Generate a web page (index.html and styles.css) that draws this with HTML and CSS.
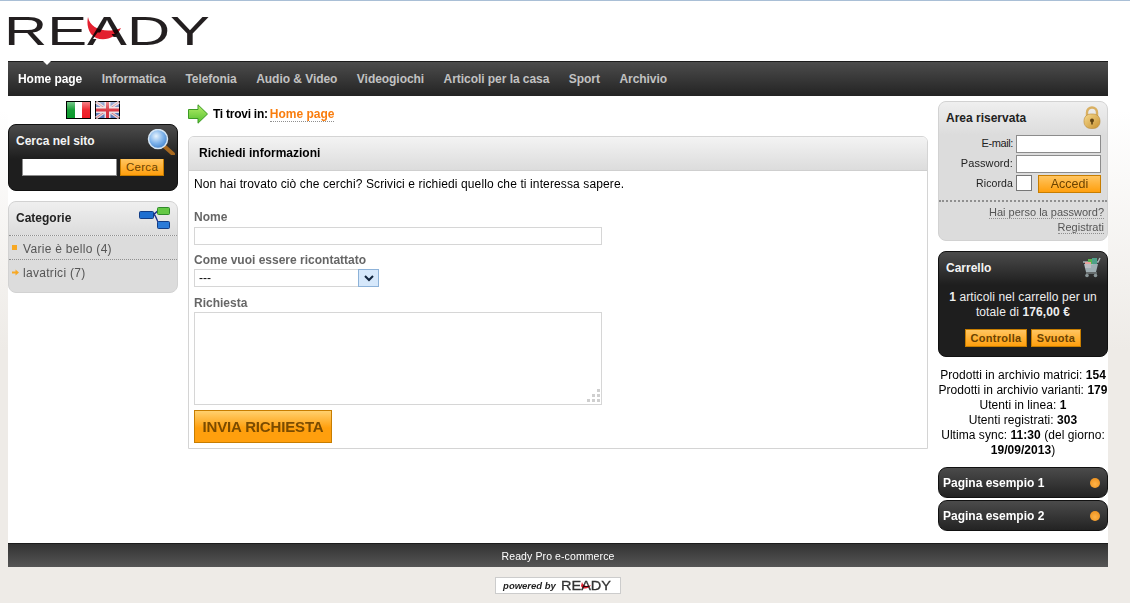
FILE: index.html
```html
<!DOCTYPE html>
<html lang="it">
<head>
<meta charset="utf-8">
<title>Ready Pro e-commerce</title>
<link rel="stylesheet" href="styles.css">
</head>
<body>
<div class="page">
  <header class="head">
    <svg class="logo" width="200" height="32" viewBox="0 0 200 32">
      <text x="-4" y="31" font-family="Liberation Sans" font-size="41.5" fill="#231f20" textLength="206" lengthAdjust="spacingAndGlyphs">READY</text>
      <polygon points="89.500,18.500 102.500,18.500 107,25 85,25" fill="#fff"/>
      <path class="crescent" d="M80 3C82 15 98 20 113 14C108 26 90 29 83 20C79 14 79 8 80 3Z" fill="#e3202f"/>
    </svg>
  </header>
  <nav class="nav">
    <a class="nav-item active" href="#">Home page</a>
    <a class="nav-item" href="#">Informatica</a>
    <a class="nav-item" href="#">Telefonia</a>
    <a class="nav-item" href="#">Audio &amp; Video</a>
    <a class="nav-item" href="#">Videogiochi</a>
    <a class="nav-item" href="#">Articoli per la casa</a>
    <a class="nav-item" href="#">Sport</a>
    <a class="nav-item" href="#">Archivio</a>
  </nav>
  <div class="cols">
    <aside class="side">
      <div class="flags">
        <svg class="flag" width="25" height="18" viewBox="0 0 25 18">
          <defs><linearGradient id="gl" x1="0" y1="0" x2="0" y2="1"><stop offset="0" stop-color="#fff" stop-opacity=".45"/><stop offset=".5" stop-color="#fff" stop-opacity=".05"/><stop offset="1" stop-color="#fff" stop-opacity="0"/></linearGradient></defs>
          <rect width="25" height="18" fill="#000"/>
          <rect x="1" y="1" width="8" height="16" fill="#0b9a2c"/>
          <rect x="9" y="1" width="7" height="16" fill="#fff"/>
          <rect x="16" y="1" width="8" height="16" fill="#ee1c25"/>
          <rect x="1" y="1" width="23" height="16" fill="url(#gl)"/>
        </svg>
        <svg class="flag" width="25" height="18" viewBox="0 0 25 18">
          <rect width="25" height="18" fill="#000"/>
          <rect x="1" y="1" width="23" height="16" fill="#5a78b8"/>
          <path d="M1 1L24 17M24 1L1 17" stroke="#e6d6da" stroke-width="3"/>
          <path d="M1 1L24 17M24 1L1 17" stroke="#cf7a86" stroke-width="1"/>
          <path d="M12.500 1V17M1 9H24" stroke="#eadfe2" stroke-width="6"/>
          <path d="M12.500 1V17M1 9H24" stroke="#d8303c" stroke-width="3"/>
          <rect x="1" y="1" width="23" height="16" fill="url(#gl)"/>
        </svg>
      </div>
      <section class="box dark search">
        <div class="box-title">Cerca nel sito
          <svg class="box-icon" width="28" height="26" viewBox="0 0 28 26">
            <defs><radialGradient id="lens" cx=".4" cy=".35" r=".7"><stop offset="0" stop-color="#e6f3fd"/><stop offset=".55" stop-color="#7db2ea"/><stop offset="1" stop-color="#3f7fc8"/></radialGradient></defs>
            <path d="M17 17L26 25" stroke="#a8691f" stroke-width="4" stroke-linecap="round"/>
            <circle cx="11" cy="10" r="9.500" fill="url(#lens)" stroke="#d6e6f4" stroke-width="1.500"/>
          </svg>
        </div>
        <form class="search-row">
          <input class="search-input" type="text" aria-label="Cerca">
          <button class="btn btn-small" type="button">Cerca</button>
        </form>
      </section>
      <section class="box light cats">
        <div class="box-title">Categorie
          <svg class="box-icon" width="31" height="22" viewBox="0 0 31 22">
            <path d="M14 7C18 7 17 3 21 3M14 7C18 8 18 17 21 17" fill="none" stroke="#1c2f8a" stroke-width="1.300"/>
            <rect x=".5" y="4.500" width="14" height="7" rx="1" fill="#1f6fd0" stroke="#123d85"/>
            <rect x="18.500" y=".5" width="12" height="7" rx="1" fill="#64c845" stroke="#2f8a2a"/>
            <rect x="18.500" y="14.500" width="12" height="7" rx="1" fill="#2a7ad8" stroke="#123d85"/>
          </svg>
        </div>
        <ul class="cat-list">
          <li class="cat"><span class="bullet-square"></span>Varie è bello (4)</li>
          <li class="cat"><svg class="bullet-arrow" width="7" height="7" viewBox="0 0 7 7"><path d="M0 2.500H3.500V.5L7 3.500L3.500 6.500V4.500H0Z" fill="#f7a823"/></svg>lavatrici (7)</li>
        </ul>
      </section>
    </aside>

    <main class="center">
      <div class="crumbs">
        <svg width="20" height="20" viewBox="0 0 20 20">
          <defs><linearGradient id="ga" x1="0" y1="0" x2="0" y2="1"><stop offset="0" stop-color="#b6ee6a"/><stop offset="1" stop-color="#52c02e"/></linearGradient></defs>
          <path d="M.5 5.500H10V.8L19.500 10L10 19.200V14.500H.5Z" fill="url(#ga)" stroke="#3c9a24"/>
        </svg>
        <span class="crumb-label">Ti trovi in:</span>
        <a class="crumb-link" href="#">Home page</a>
      </div>
      <section class="panel">
        <h1 class="panel-title">Richiedi informazioni</h1>
        <form class="panel-body">
          <p class="intro">Non hai trovato ciò che cerchi? Scrivici e richiedi quello che ti interessa sapere.</p>
          <label class="field-label first" for="nome">Nome</label>
          <input class="field" id="nome" type="text">
          <label class="field-label second" for="mode">Come vuoi essere ricontattato</label>
          <div class="select-wrap">
            <select class="select" id="mode"><option>---</option></select>
            <span class="select-arrow"><svg width="10" height="7" viewBox="0 0 10 7"><path d="M1 1L5 5L9 1" fill="none" stroke="#10233c" stroke-width="2"/></svg></span>
          </div>
          <label class="field-label third" for="req">Richiesta</label>
          <div class="area-wrap">
            <textarea class="area" id="req"></textarea>
            <svg class="grip" width="15" height="15" viewBox="0 0 15 15" fill="#cfcfcf"><rect x="11" y="0" width="3" height="3"/><rect x="6" y="5" width="3" height="3"/><rect x="11" y="5" width="3" height="3"/><rect x="1" y="10" width="3" height="3"/><rect x="6" y="10" width="3" height="3"/><rect x="11" y="10" width="3" height="3"/></svg>
          </div>
          <button class="btn btn-big" type="button">INVIA RICHIESTA</button>
        </form>
      </section>
    </main>

    <aside class="side">
      <section class="box light login">
        <div class="box-title">Area riservata
          <svg class="box-icon lock" width="18" height="23" viewBox="0 0 18 23">
            <defs><linearGradient id="lk" x1="0" y1="0" x2="1" y2="1"><stop offset="0" stop-color="#f6d98e"/><stop offset="1" stop-color="#c8912f"/></linearGradient></defs>
            <path d="M4 10V6.500a5 5 0 0 1 10 0V10" fill="none" stroke="#d9b062" stroke-width="2.400"/>
            <rect x="1" y="8" width="16" height="14.500" rx="6.500" fill="url(#lk)" stroke="#b98a38" stroke-width=".6"/>
            <circle cx="9" cy="14.500" r="2" fill="#5f4212"/>
            <rect x="8.200" y="14.500" width="1.600" height="4" fill="#5f4212"/>
          </svg>
        </div>
        <form class="login-form">
          <div class="login-row"><label class="login-label email" for="em">E-mail:</label><input class="login-input" id="em" type="text"></div>
          <div class="login-row"><label class="login-label" for="pw">Password:</label><input class="login-input" id="pw" type="password"></div>
          <div class="login-row"><label class="login-label small" for="rm">Ricorda</label><input class="check" id="rm" type="checkbox"><button class="btn btn-login" type="button">Accedi</button></div>
        </form>
        <div class="login-links">
          <a class="login-link" href="#">Hai perso la password?</a>
          <a class="login-link" href="#">Registrati</a>
        </div>
      </section>
      <section class="box dark cart">
        <div class="box-title">Carrello
          <svg class="box-icon" width="19" height="21" viewBox="0 0 19 21">
            <path d="M1 5H16L18 1" fill="none" stroke="#aab4b6" stroke-width="1.500"/>
            <rect x="6" y="2" width="5" height="6" fill="#5bb450"/><rect x="10" y="1" width="5" height="6" fill="#4f9f8a"/><rect x="3" y="5" width="6" height="6" fill="#e9a4a0"/>
            <path d="M2 7H16L14 15H4Z" fill="#b4c4ca" fill-opacity=".85"/>
            <path d="M4 16H15" stroke="#9aa6a8"/>
            <circle cx="5" cy="18.500" r="1.800" fill="#8a9698"/><circle cx="13.500" cy="18.500" r="1.800" fill="#8a9698"/>
          </svg>
        </div>
        <p class="cart-text"><b>1</b> articoli nel carrello per un totale di <b>176,00 €</b></p>
        <div class="cart-actions">
          <button class="btn btn-small bold" type="button">Controlla</button>
          <button class="btn btn-small bold" type="button">Svuota</button>
        </div>
      </section>
      <div class="stats">
        <div>Prodotti in archivio matrici: <b>154</b></div>
        <div>Prodotti in archivio varianti: <b>179</b></div>
        <div>Utenti in linea: <b>1</b></div>
        <div>Utenti registrati: <b>303</b></div>
        <div>Ultima sync: <b>11:30</b> (del giorno: <b>19/09/2013</b>)</div>
      </div>
      <div class="pages">
        <a class="page-link" href="#">Pagina esempio 1<span class="dot"></span></a>
        <a class="page-link" href="#">Pagina esempio 2<span class="dot"></span></a>
      </div>
    </aside>
  </div>
  <footer class="foot">Ready Pro e-commerce</footer>
  <div class="powered-row">
    <div class="powered"><em class="powered-by">powered by</em>
      <svg class="mini-logo" width="52" height="11" viewBox="0 0 52 11"><text x="0" y="10" font-family="Liberation Sans" font-size="13.500" fill="#333" stroke="#333" stroke-width=".3" textLength="50" lengthAdjust="spacingAndGlyphs">READY</text><path class="crescent" d="M21 2C22 6 26 7 30 5C28 9 22 10 20 6Z" fill="#e3202f"/></svg>
    </div>
  </div>
</div>
</body>
</html>
```
FILE: styles.css
```css
* { box-sizing: border-box; }
html, body { margin: 0; padding: 0; }
body {
  min-height: 603px;
  border-top: 1px solid #a9bfd6;
  background: linear-gradient(#fff 0, #fff 110px, #eeebe7 350px, #eeebe7 100%);
  font-family: "Liberation Sans", Arial, sans-serif;
  font-size: 12px;
  color: #000;
}
a { text-decoration: none; color: inherit; }
p, h1, ul { margin: 0; padding: 0; }
ul { list-style: none; }

.page { width: 1100px; margin-left: 8px; }
.head { height: 60px; background: #fff; padding-top: 13px; }
.logo { display: block; overflow: visible; }
.crescent { mix-blend-mode: multiply; }
.mini-logo { display: block; overflow: visible; }

.nav {
  height: 35px;
  display: flex;
  align-items: center;
  gap: 19.500px;
  padding: 0 10px;
  border-top: 1px solid #1c1c1c;
  background: linear-gradient(#4c4c4c, #232323);
  position: relative;
}
.nav-item { font-weight: bold; color: #c2c2c2; white-space: nowrap; letter-spacing: -.05px; }
.nav-item.active { color: #fff; position: relative; }
.nav-item.active::before {
  content: "";
  position: absolute;
  left: 24px;
  top: -12px;
  border: 5px solid transparent;
  border-top-color: #fff;
  border-bottom: 0;
}

.cols { display: flex; gap: 10px; background: #fff; height: 447px; padding-bottom: 0; }
.side { width: 170px; flex: none; }
.center { width: 740px; flex: none; }

.flags { display: flex; justify-content: center; gap: 4px; padding-top: 5px; height: 28px; }
.flag { display: block; }

.box { border-radius: 8px; position: relative; }
.box-title {
  height: 34px;
  padding: 0 7px 2px;
  display: flex;
  align-items: center;
  font-weight: bold;
  position: relative;
}
.box-icon { position: absolute; }
.dark { background: #1e1e1e; color: #fff; border: 1px solid #111; }
.dark .box-title {
  background: linear-gradient(#4b4b4b, #1e1e1e);
  border-radius: 7px 7px 0 0;
  color: #f4f4f4;
}
.light { background: #dcdcdc; border: 1px solid #d2d2d2; color: #222; }
.light .box-title {
  background: linear-gradient(#efefef, #dcdcdc);
  border-radius: 7px 7px 0 0;
}

.search { height: 67px; margin-bottom: 10px; }
.search .box-icon { right: 2px; top: 4px; }
.search-row { display: flex; gap: 3px; padding-left: 13px; align-items: flex-start; margin-top: -1px; }
.search-input { width: 95px; height: 18px; border: 1px solid #8c8c8c; background: #fff; padding: 0; }

.btn {
  font-family: inherit;
  cursor: pointer;
  padding: 0;
  background: linear-gradient(#ffc561, #ff9f0d);
  border: 1px solid #c77d00;
  color: #7a4b00;
  font-weight: bold;
}
.btn-small { height: 18px; font-size: 11.500px; width: 44px; letter-spacing: .3px; font-weight: normal; color: #6b4200; }
.btn-small.bold { font-weight: bold; font-size: 11px; }

.cats { height: 92px; }
.cats .box-icon { right: 7px; top: 5px; }
.cats .box-title { border-bottom: 1px dotted #8f8f8f; }
.cat {
  height: 24px;
  display: flex;
  align-items: center;
  padding: 2px 0 0 14px;
  color: #555;
  position: relative;
  letter-spacing: .3px;
}
.cat:first-child { border-bottom: 1px dotted #8f8f8f; }
.bullet-square { position: absolute; left: 3px; top: 9px; width: 5px; height: 5px; background: #f7a823; }
.bullet-arrow { position: absolute; left: 3px; top: 9px; }

.crumbs { display: flex; align-items: center; height: 40px; padding-bottom: 4px; }
.crumb-label { font-weight: bold; margin: 0 2px 0 5px; letter-spacing: -.25px; }
.crumb-link { color: #f97d0e; font-weight: bold; border-bottom: 1px dotted #8f8f8f; }

.panel { height: 313px; border: 1px solid #d4d4d4; border-radius: 6px 6px 0 0; }
.panel-title {
  height: 34px;
  line-height: 32px;
  padding-left: 10px;
  font-size: 12px;
  font-weight: bold;
  background: linear-gradient(#f3f3f3, #dcdcdc);
  border-bottom: 1px solid #cfcfcf;
  border-radius: 5px 5px 0 0;
}
.panel-body { padding: 6px 5px 0; display: flex; flex-direction: column; align-items: flex-start; }
.intro { line-height: 15px; letter-spacing: .12px; }
.field-label { font-weight: bold; color: #666; line-height: 15px; margin-top: 7px; }
.field-label.first { margin-top: 18px; }
.field-label.second { margin-top: 8px; }
.field-label.third { margin-top: 9px; }
.field { width: 408px; height: 18px; border: 1px solid #d6d6d6; background: #fff; margin-top: 2px; padding: 0; }
.select-wrap { width: 185px; height: 18px; display: flex; margin-top: 1px; position: relative; }
.select {
  appearance: none;
  flex: 1;
  height: 18px;
  border: 1px solid #d6d6d6;
  border-right: 0;
  background: #fff;
  font: 12px "Liberation Sans", Arial, sans-serif;
  padding: 0 0 0 4px;
  border-radius: 0;
}
.select-arrow {
  width: 21px;
  height: 18px;
  background: #d6e8fb;
  border: 1px solid #8db2d8;
  display: flex;
  align-items: center;
  justify-content: center;
}
.area-wrap { position: relative; width: 408px; height: 93px; margin-top: 1px; }
.area { display: block; width: 408px; height: 93px; border: 1px solid #d6d6d6; resize: none; padding: 0; }
.grip { position: absolute; right: 1px; bottom: 1px; }
.btn-big { width: 138px; height: 33px; margin-top: 5px; font-size: 15px; letter-spacing: -.15px; color: #7a4b00; background: linear-gradient(#ffd06e, #ff9f0d 55%); }

.login { height: 140px; margin-bottom: 10px; margin-top: 5px; }
.login .box-title { height: 33px; padding-bottom: 1px; }
.lock { right: 6px; top: 4px; }
.login-form { display: flex; flex-direction: column; gap: 2px; padding-right: 6px; }
.login-row { display: flex; justify-content: flex-end; align-items: center; height: 18px; }
.login-label { margin: 0 3px 3px 0; font-size: 11px; color: #222; letter-spacing: .1px; }
.login-label.email { letter-spacing: -.4px; }
.login-input { width: 85px; height: 18px; border: 1px solid #8c8c8c; background: #fff; padding: 0; }
.login-label.small { font-size: 10.500px; margin-right: 3px; }
.check { appearance: none; width: 16px; height: 16px; margin: 0 6px 2px 0; background: #fff; border: 1px solid #777; }
.btn-login { width: 63px; height: 18px; font-size: 12.500px; font-weight: normal; color: #6b4200; }
.login-links {
  margin-top: 7px;
  border-top: 2px dotted #8f8f8f;
  display: flex;
  flex-direction: column;
  align-items: flex-end;
  padding: 4px 3px 0 0;
  font-size: 11px;
  color: #555;
  line-height: 12px;
  gap: 2px;
}
.login-link { border-bottom: 1px dotted #8f8f8f; }

.cart { height: 106px; margin-bottom: 10px; }
.cart .box-title { height: 33px; }
.cart .box-icon { right: 6px; top: 5px; }
.cart-text { text-align: center; line-height: 15px; padding: 5px 4px 0; color: #eee; letter-spacing: .12px; }
.cart-actions { display: flex; justify-content: center; gap: 4px; margin-top: 9px; }
.cart-actions .btn:first-child { width: 62px; }
.cart-actions .btn:last-child { width: 50px; }

.stats { text-align: center; line-height: 15px; margin-top: 11px; white-space: normal; letter-spacing: .05px; }
.pages { margin-top: 9px; display: flex; flex-direction: column; gap: 2px; }
.page-link {
  height: 31px;
  border: 1px solid #111;
  border-radius: 9px;
  background: linear-gradient(#4b4b4b, #232323);
  color: #fff;
  font-weight: bold;
  display: flex;
  align-items: center;
  justify-content: space-between;
  padding: 0 7px 0 4px;
}
.dot {
  width: 10px;
  height: 10px;
  border-radius: 50%;
  background: radial-gradient(circle at 50% 60%, #ffb347, #e98a17);
}

.foot {
  height: 24px;
  line-height: 24px;
  text-align: center;
  font-size: 10.500px;
  letter-spacing: .1px;
  color: #fff;
  background: linear-gradient(#333, #555);
  border-top: 1px solid #1c1c1c;
}
.powered-row { display: flex; justify-content: center; padding-top: 10px; }
.powered {
  width: 126px;
  height: 17px;
  background: #fff;
  border: 1px solid #ccc;
  display: flex;
  align-items: center;
  justify-content: center;
  gap: 5px;
}
.powered-by { font-size: 9.500px; font-weight: bold; color: #222; }
```
